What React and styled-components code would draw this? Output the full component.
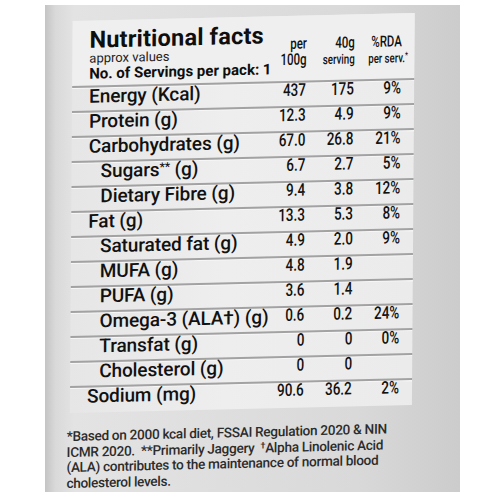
import React from "react";
import styled, { createGlobalStyle } from "styled-components";

const Global = createGlobalStyle`
  html, body { margin: 0; padding: 0; background: #ffffff; }
  body { font-family: Roboto, "Liberation Sans", Arial, sans-serif; color: #111111; }
`;

const Pack = styled.div`
  box-sizing: border-box;
  width: 415px;
  height: 487px;
  margin: 5px 0 0 45px;
  padding: 12px 0 0 26px;
  background: linear-gradient(90deg, #c4c4c4 0%, #d9d9d9 2.5%, #e3e3e3 7%, #e0e0e0 30%, #d9d9d9 75%, #cccccc 100%);
  overflow: hidden;
`;

const Label = styled.div`
  width: 342px;
  transform: skew(-0.4deg, -1.35deg);
  transform-origin: 50% 50%;
`;

const Panel = styled.div`
  background: linear-gradient(90deg, #e6e6e6 0%, #eeeeee 45%, #ebebeb 100%);
  padding-bottom: 2px;
`;

const Grid = styled.div`
  display: grid;
  grid-template-columns: minmax(0, 1fr) 60px 48px 47px;
  padding: 0 13px 0 17px;
`;

const Header = styled(Grid)`
  height: 65px;
  box-sizing: border-box;
  background: #efefef;
`;

const TitleBlock = styled.div`
  padding-top: 6.5px;
  white-space: nowrap;
`;

const Title = styled.div`
  font-weight: 700;
  font-size: 23.5px;
  line-height: 24px;
  letter-spacing: 0.2px;
  color: #0e0e0e;
`;

const Approx = styled.div`
  font-size: 13px;
  line-height: 14px;
  color: #222;
`;

const Servings = styled.div`
  font-weight: 700;
  font-size: 15px;
  line-height: 16px;
  color: #0e0e0e;
`;

const HeadCell = styled.div`
  padding-top: 20px;
  text-align: right;
  line-height: 15px;
  white-space: nowrap;
  font-weight: 500;
`;

const Squeeze = styled.span`
  display: inline-block;
  white-space: nowrap;
  transform: scaleX(${(p) => p.$sx || 0.77});
  transform-origin: 100% 50%;
  font-size: ${(p) => p.$size}px;
`;

const Row = styled(Grid)`
  height: 25px;
  box-sizing: border-box;
  border-top: 2px solid #a2a2a2;
  box-shadow: inset 0 1px 0 #f7f7f7;
  align-items: start;
`;

const Name = styled.div`
  font-size: 19px;
  font-weight: 500;
  line-height: 18px;
  letter-spacing: -0.1px;
  padding-left: ${(p) => (p.$sub ? 12 : 0)}px;
  white-space: nowrap;
`;

const Sup = styled.span`
  font-size: 12px;
  vertical-align: 5px;
  line-height: 0;
`;

const Value = styled.div`
  text-align: right;
  line-height: 15px;
  font-weight: 500;
  white-space: nowrap;
`;

const Foot = styled.div`
  margin: 16px 0 0 -3px;
  width: 360px;
  font-size: 13.6px;
  font-weight: 500;
  line-height: 15.5px;
  letter-spacing: -0.3px;
  color: #2c2c2c;
  white-space: nowrap;
`;

const FootSup = styled.span`
  font-size: 9px;
  vertical-align: 4px;
  line-height: 0;
`;

const rows = [
  { name: "Energy (Kcal)", a: "437", b: "175", c: "9%" },
  { name: "Protein (g)", a: "12.3", b: "4.9", c: "9%" },
  { name: "Carbohydrates (g)", a: "67.0", b: "26.8", c: "21%" },
  { name: <>Sugars<Sup>**</Sup> (g)</>, a: "6.7", b: "2.7", c: "5%", sub: true },
  { name: "Dietary Fibre (g)", a: "9.4", b: "3.8", c: "12%", sub: true },
  { name: "Fat (g)", a: "13.3", b: "5.3", c: "8%" },
  { name: "Saturated fat (g)", a: "4.9", b: "2.0", c: "9%", sub: true },
  { name: "MUFA (g)", a: "4.8", b: "1.9", c: "", sub: true },
  { name: "PUFA (g)", a: "3.6", b: "1.4", c: "", sub: true },
  { name: "Omega-3 (ALA†) (g)", a: "0.6", b: "0.2", c: "24%", sub: true },
  { name: "Transfat (g)", a: "0", b: "0", c: "0%", sub: true },
  { name: "Cholesterol (g)", a: "0", b: "0", c: "", sub: true },
  { name: "Sodium (mg)", a: "90.6", b: "36.2", c: "2%" },
];

function Num({ children }) {
  return (
    <Value>
      <Squeeze $size={17.5}>{children}</Squeeze>
    </Value>
  );
}

export default function App() {
  return (
    <>
      <Global />
      <Pack>
        <Label>
          <Panel>
            <Header>
              <TitleBlock>
                <Title>Nutritional facts</Title>
                <Approx>approx values</Approx>
                <Servings>No. of Servings per pack: 1</Servings>
              </TitleBlock>
              <HeadCell>
                <Squeeze $size={15.5} $sx={0.74}>per</Squeeze>
                <br />
                <Squeeze $size={16} $sx={0.72}>100g</Squeeze>
              </HeadCell>
              <HeadCell>
                <Squeeze $size={15.5} $sx={0.74}>40g</Squeeze>
                <br />
                <Squeeze $size={13.5} $sx={0.72}>serving</Squeeze>
              </HeadCell>
              <HeadCell>
                <Squeeze $size={15.5} $sx={0.74}>%RDA</Squeeze>
                <br />
                <Squeeze $size={13} $sx={0.74}>per serv.<FootSup>*</FootSup></Squeeze>
              </HeadCell>
            </Header>
            {rows.map((r, i) => (
              <Row key={i}>
                <Name $sub={r.sub}>{r.name}</Name>
                <Num>{r.a}</Num>
                <Num>{r.b}</Num>
                <Num>{r.c}</Num>
              </Row>
            ))}
          </Panel>
          <Foot>
            *Based on 2000 kcal diet, FSSAI Regulation 2020 &amp; NIN
            <br />
            ICMR 2020.&nbsp; **Primarily Jaggery&nbsp; <FootSup>†</FootSup>Alpha Linolenic Acid
            <br />
            (ALA) contributes to the maintenance of normal blood
            <br />
            cholesterol levels.
          </Foot>
        </Label>
      </Pack>
    </>
  );
}
